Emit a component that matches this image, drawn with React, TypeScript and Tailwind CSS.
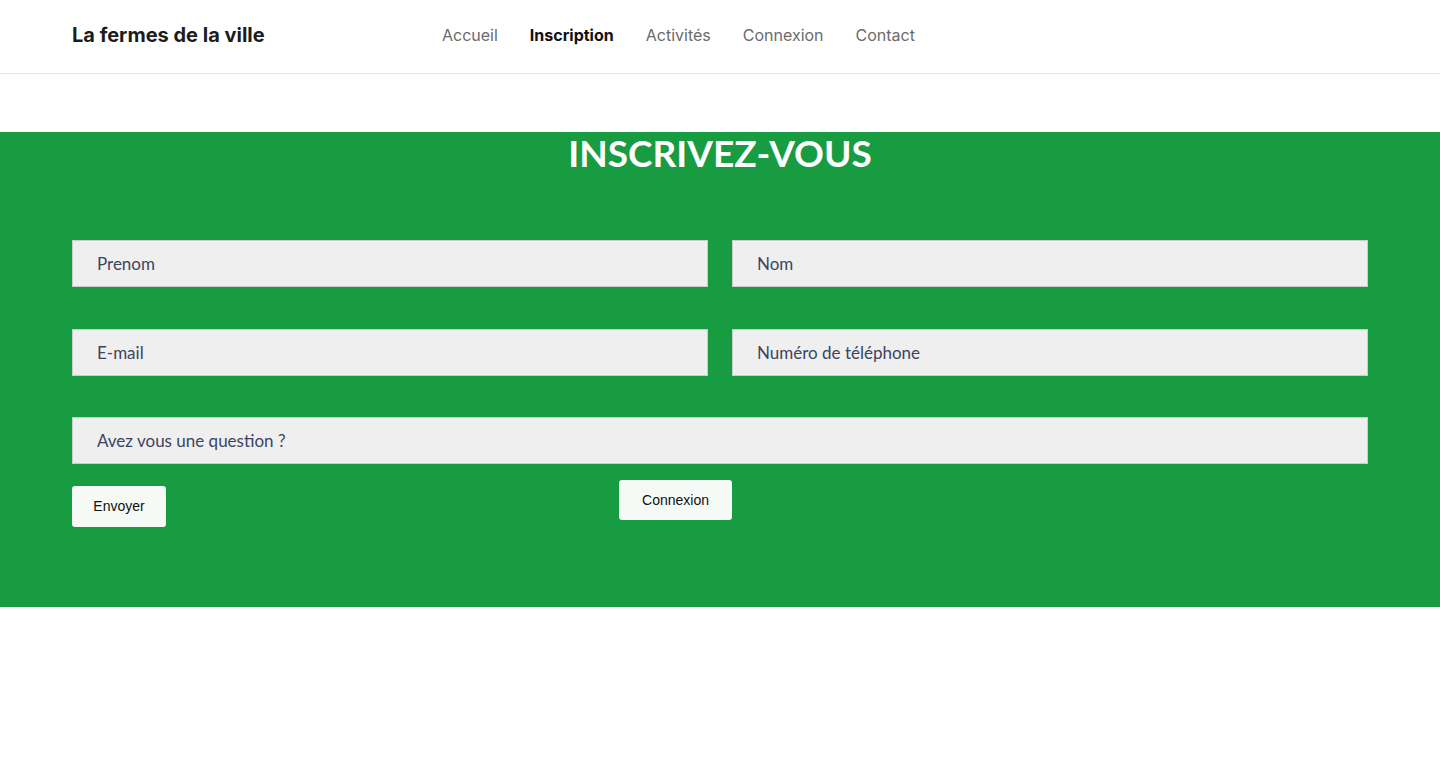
export default function App() {
  const inputCls =
    "h-[47px] w-full border border-[#c9cdd0] bg-[#efeff0] pl-[24px] text-[17px] text-[#3b4461] outline-none placeholder:text-[#3b4461]";
  const raleway = { fontFamily: '"Lato", "Open Sans", sans-serif' };
  return (
    <div className="min-h-[770px] bg-white" style={{ fontFamily: 'Inter, "Noto Sans", sans-serif' }}>
      <header className="flex h-[74px] items-center border-b border-[#e5e5e5] px-[72px] pb-[4px]">
        <div className="w-[370px] text-[20px] font-bold text-[#1c1c1c]">La fermes de la ville</div>
        <nav className="flex gap-[32px] text-[16px] text-[#6b6b6b]">
          <span>Accueil</span>
          <span className="font-bold text-[#111]">Inscription</span>
          <span>Activités</span>
          <span>Connexion</span>
          <span>Contact</span>
        </nav>
      </header>
      <section className="mt-[58px] h-[475px] bg-[#189c42] px-[72px]" style={raleway}>
        <h1 className="pt-[0px] text-center text-[37px] font-bold leading-[42px] text-white">INSCRIVEZ-VOUS</h1>
        <div className="mt-[66px] grid grid-cols-2 gap-x-[24px] gap-y-[42px]">
          <input className={inputCls} placeholder="Prenom" style={raleway} />
          <input className={inputCls} placeholder="Nom" style={raleway} />
          <input className={inputCls} placeholder="E-mail" style={raleway} />
          <input className={inputCls} placeholder="Numéro de téléphone" style={raleway} />
        </div>
        <input className={inputCls + " mt-[41px]"} placeholder="Avez vous une question ?" style={raleway} />
        <div className="mt-[16px] flex items-start" style={{ fontFamily: '"Liberation Sans", Arial, sans-serif' }}>
          <button className="mt-[6px] h-[41px] w-[94px] rounded-[3px] bg-[#f5faf7] text-[14px] text-[#111]">Envoyer</button>
          <button className="ml-[453px] h-[40px] w-[113px] rounded-[3px] bg-[#f5faf7] text-[14px] text-[#111]">Connexion</button>
        </div>
      </section>
    </div>
  );
}
